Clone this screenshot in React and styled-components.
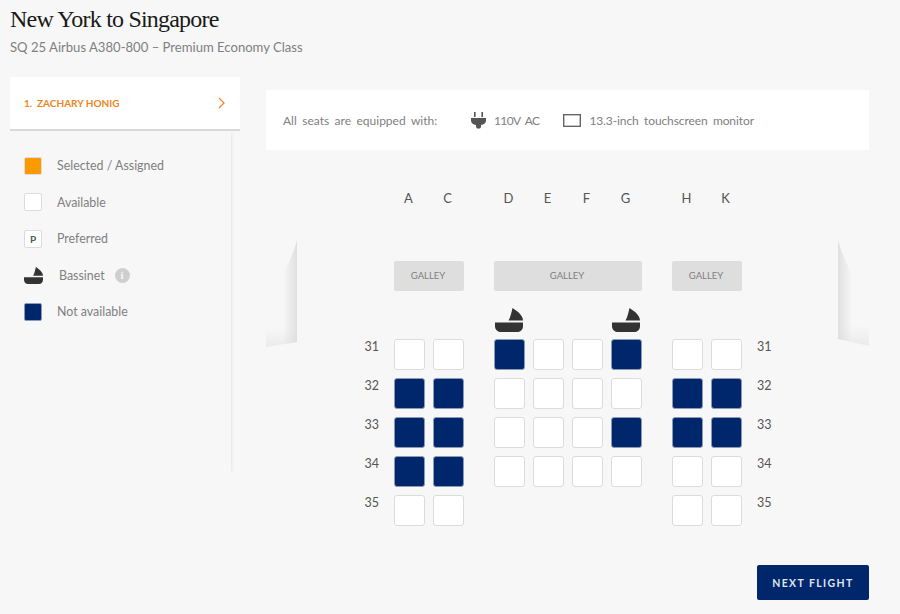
import React from "react";
import styled, { createGlobalStyle } from "styled-components";

const Global = createGlobalStyle`
  html, body { margin: 0; padding: 0; background: #f7f7f7; }
  body { font-family: "Lato", "Liberation Sans", sans-serif; overflow: hidden; }
  * { box-sizing: border-box; }
`;

const Page = styled.div`
  width: 900px;
  height: 614px;
  background: #f7f7f7;
  overflow: hidden;
`;
const Header = styled.header`
  padding: 5px 0 0 10px;
  height: 77px;
`;
const Title = styled.h1`
  margin: 0;
  font: 400 24px/28px "Liberation Serif", serif;
  letter-spacing: -0.8px;
  color: #1a1a1a;
`;
const Subtitle = styled.p`
  margin: 5px 0 0;
  font-size: 13.1px;
  line-height: 18px;
  color: #808080;
`;
const Body = styled.div`
  display: flex;
  align-items: flex-start;
`;
const Sidebar = styled.aside`
  width: 230px;
  margin-left: 10px;
  flex: none;
`;
const Passenger = styled.div`
  height: 54px;
  background: #fff;
  border-bottom: 2px solid #d9d9d9;
  display: flex;
  align-items: center;
  justify-content: space-between;
  padding: 0 15px 0 14px;
  font-size: 10px;
  font-weight: 700;
  color: #ee8420;
`;
const Legend = styled.ul`
  margin: 0;
  width: 221px;
  height: 343px;
  padding: 16.3px 0 0 14px;
  list-style: none;
  box-shadow: 3px 0 3px -2px rgba(0, 0, 0, 0.07);
`;
const LegendRow = styled.li`
  height: 36.5px;
  display: flex;
  align-items: center;
  font-size: 12.4px;
  color: #808080;
`;
const LegendIcon = styled.span`
  width: 33px;
  flex: none;
  display: flex;
`;
const Swatch = styled.span`
  width: 18px;
  height: 18px;
  border-radius: 2px;
  border: 1px solid ${(p) => (p.$kind === "selected" ? "#ddd" : p.$kind === "taken" ? "#8d9ab5" : "#dcdcdc")};
  background: ${(p) => (p.$kind === "selected" ? "#ff9900" : p.$kind === "taken" ? "#00266b" : "#fff")};
  color: #555;
  font-size: 10px;
  font-weight: 700;
  display: flex;
  align-items: center;
  justify-content: center;
`;
const BassinetLabel = styled.span`
  margin-left: 2px;
`;
const InfoDot = styled.span`
  width: 15px;
  height: 15px;
  margin-left: 10px;
  border-radius: 50%;
  background: #cfcfcf;
  color: #f7f7f7;
  font: 700 11px/15px "Liberation Serif", serif;
  text-align: center;
`;
const Main = styled.main`
  width: 603px;
  margin: 13px 0 0 26px;
  flex: none;
`;
const InfoBar = styled.div`
  height: 60px;
  background: #fff;
  display: flex;
  align-items: center;
  padding-left: 17px;
  font-size: 12px;
  color: #808080;
  word-spacing: 2.4px;
`;
const InfoLead = styled.span`
  width: 188px;
`;
const InfoItem = styled.span`
  display: flex;
  align-items: center;
  gap: ${(p) => p.$gap}px;
  margin-right: ${(p) => p.$after || 0}px;
  letter-spacing: ${(p) => p.$track || 0}px;
`;
const Cabin = styled.section`
  position: relative;
  height: 415px;
  padding-top: 40px;
`;
const Wall = styled.svg`
  position: absolute;
  top: 90px;
  ${(p) => (p.$side === "left" ? "left: 0;" : "right: 0;")}
`;
const Row = styled.div`
  display: grid;
  grid-template-columns: 120px 31px 31px 14px 31px 31px 31px 31px 14px 31px 31px 40px;
  column-gap: 8px;
  margin-top: ${(p) => p.$top || 0}px;
  height: ${(p) => p.$height}px;
`;
const Letter = styled.span`
  grid-column: ${(p) => p.$col};
  text-align: center;
  padding-right: 2px;
  font-size: 13px;
  line-height: 16px;
  color: #555;
`;
const Galley = styled.div`
  grid-column: ${(p) => p.$span};
  background: #dedede;
  border-radius: 2px;
  color: #808080;
  font-size: 9.5px;
  line-height: 30px;
  text-align: center;
  padding-right: 2px;
`;
const Cot = styled.svg`
  grid-column: ${(p) => p.$col};
  display: block;
  margin-left: 1px;
`;
const SeatNo = styled.span`
  grid-column: ${(p) => p.$col};
  font-size: 12.5px;
  line-height: 16px;
  color: #555;
  text-align: ${(p) => (p.$col === 1 ? "right" : "left")};
  padding: ${(p) => (p.$col === 1 ? "0 7px 0 0" : "0 0 0 7px")};
`;
const Seat = styled.div`
  grid-column: ${(p) => p.$col};
  width: 31px;
  height: 31px;
  border-radius: 3px;
  background: ${(p) => (p.$taken ? "#00266b" : "#fff")};
  border: 1px solid ${(p) => (p.$taken ? "#8d9ab5" : "#dcdcdc")};
`;
const Footer = styled.div`
  display: flex;
  justify-content: flex-end;
`;
const NextButton = styled.button`
  width: 112px;
  height: 35px;
  border: 0;
  border-radius: 2px;
  background: #00266b;
  color: #dfe5f0;
  font: 700 10.5px "Lato", sans-serif;
  letter-spacing: 1.4px;
`;

const BassinetPaths = () => (
  <>
    <path d="M17.5 0C22 3 28 7 28 12.5H13.5C15.5 9 16.5 4 17.5 0Z" fill="#333" />
    <path d="M0 14.5H28V18C28 22 25 24 22 24H6C3 24 0 22 0 18Z" fill="#333" />
  </>
);

const COLS = { A: 2, C: 3, D: 5, E: 6, F: 7, G: 8, H: 10, K: 11 };
const ROWS = [
  { n: 31, seats: "A.C.DxE.F.GxH.K." },
  { n: 32, seats: "AxCxD.E.F.G.HxKx" },
  { n: 33, seats: "AxCxD.E.F.GxHxKx" },
  { n: 34, seats: "AxCxD.E.F.G.H.K." },
  { n: 35, seats: "A.C.H.K." },
];
const parse = (s) => s.match(/../g).map((p) => ({ l: p[0], taken: p[1] === "x" }));

export default function App() {
  return (
    <Page>
      <Global />
      <Header>
        <Title>New York to Singapore</Title>
        <Subtitle>SQ 25 Airbus A380-800 – Premium Economy Class</Subtitle>
      </Header>
      <Body>
        <Sidebar>
          <Passenger>
            <span>1.&nbsp; ZACHARY HONIG</span>
            <svg width="7" height="12" viewBox="0 0 7 12" fill="none" stroke="#ee8420" strokeWidth="1.2">
              <path d="M1 1l5 5-5 5" />
            </svg>
          </Passenger>
          <Legend>
            <LegendRow>
              <LegendIcon><Swatch $kind="selected" /></LegendIcon>
              Selected / Assigned
            </LegendRow>
            <LegendRow>
              <LegendIcon><Swatch /></LegendIcon>
              Available
            </LegendRow>
            <LegendRow>
              <LegendIcon><Swatch>P</Swatch></LegendIcon>
              Preferred
            </LegendRow>
            <LegendRow>
              <LegendIcon>
                <svg width="19" height="17" viewBox="0 0 28 24" preserveAspectRatio="none"><BassinetPaths /></svg>
              </LegendIcon>
              <BassinetLabel>Bassinet</BassinetLabel>
              <InfoDot>i</InfoDot>
            </LegendRow>
            <LegendRow>
              <LegendIcon><Swatch $kind="taken" /></LegendIcon>
              Not available
            </LegendRow>
          </Legend>
        </Sidebar>
        <Main>
          <InfoBar>
            <InfoLead>All seats are equipped with:</InfoLead>
            <InfoItem $gap={8} $after={24} $track={-0.6}>
              <svg width="15" height="17" viewBox="0 0 15 17" fill="#555">
                <path d="M3 0h1.6v5H3zM10.4 0H12v5h-1.6z" />
                <path d="M0 6h15v2.5c0 2.5-2 4-5 4.4V15l-1 1.5H6L5 15v-2.1C2 12.500 0 11 0 8.500z" />
              </svg>
              110V AC
            </InfoItem>
            <InfoItem $gap={8} $track={-0.1}>
              <svg width="18" height="13" viewBox="0 0 18 13" fill="none" stroke="#666" strokeWidth="1.4">
                <rect x="0.7" y="0.7" width="16.600" height="11.600" />
              </svg>
              13.3-inch touchscreen monitor
            </InfoItem>
          </InfoBar>
          <Cabin>
            <Wall $side="left" width="31" height="108" viewBox="0 0 31 108">
              <defs>
                <linearGradient id="wl" x1="0" x2="1" y1="0" y2="0">
                  <stop offset="0" stopColor="#f7f7f7" />
                  <stop offset="0.55" stopColor="#f7f7f7" />
                  <stop offset="1" stopColor="#e0e0e0" />
                </linearGradient>
                <linearGradient id="wlb" x1="0" x2="0" y1="0" y2="1">
                  <stop offset="0" stopColor="#dcdcdc" stopOpacity="0" />
                  <stop offset="1" stopColor="#dcdcdc" stopOpacity="0.45" />
                </linearGradient>
              </defs>
              <path d="M31 0V102L0 107V60C14 40 26 20 31 0Z" fill="url(#wl)" />
              <path d="M31 88V102L0 107V88Z" fill="url(#wlb)" />
            </Wall>
            <Wall $side="right" width="31" height="108" viewBox="0 0 31 108">
              <defs>
                <linearGradient id="wr" x1="1" x2="0" y1="0" y2="0">
                  <stop offset="0" stopColor="#f7f7f7" />
                  <stop offset="0.55" stopColor="#f7f7f7" />
                  <stop offset="1" stopColor="#e0e0e0" />
                </linearGradient>
                <linearGradient id="wrb" x1="0" x2="0" y1="0" y2="1">
                  <stop offset="0" stopColor="#dcdcdc" stopOpacity="0" />
                  <stop offset="1" stopColor="#dcdcdc" stopOpacity="0.45" />
                </linearGradient>
              </defs>
              <path d="M0 0V99L31 106V60C17 40 5 20 0 0Z" fill="url(#wr)" />
              <path d="M0 85V99L31 106V85Z" fill="url(#wrb)" />
            </Wall>
            <Row $height={16}>
              {Object.entries(COLS).map(([l, c]) => (
                <Letter key={l} $col={c}>{l}</Letter>
              ))}
            </Row>
            <Row $top={55} $height={30}>
              <Galley $span="2 / 4">GALLEY</Galley>
              <Galley $span="5 / 9">GALLEY</Galley>
              <Galley $span="10 / 12">GALLEY</Galley>
            </Row>
            <Row $top={17} $height={23}>
              <Cot $col={5} width="28" height="24" viewBox="0 0 28 24"><BassinetPaths /></Cot>
              <Cot $col={8} width="28" height="24" viewBox="0 0 28 24"><BassinetPaths /></Cot>
            </Row>
            {ROWS.map((r) => (
              <Row key={r.n} $height={31} $top={8}>
                <SeatNo $col={1}>{r.n}</SeatNo>
                {parse(r.seats).map((s) => (
                  <Seat key={s.l} $col={COLS[s.l]} $taken={s.taken} />
                ))}
                <SeatNo $col={12}>{r.n}</SeatNo>
              </Row>
            ))}
          </Cabin>
          <Footer>
            <NextButton>NEXT FLIGHT</NextButton>
          </Footer>
        </Main>
      </Body>
    </Page>
  );
}
